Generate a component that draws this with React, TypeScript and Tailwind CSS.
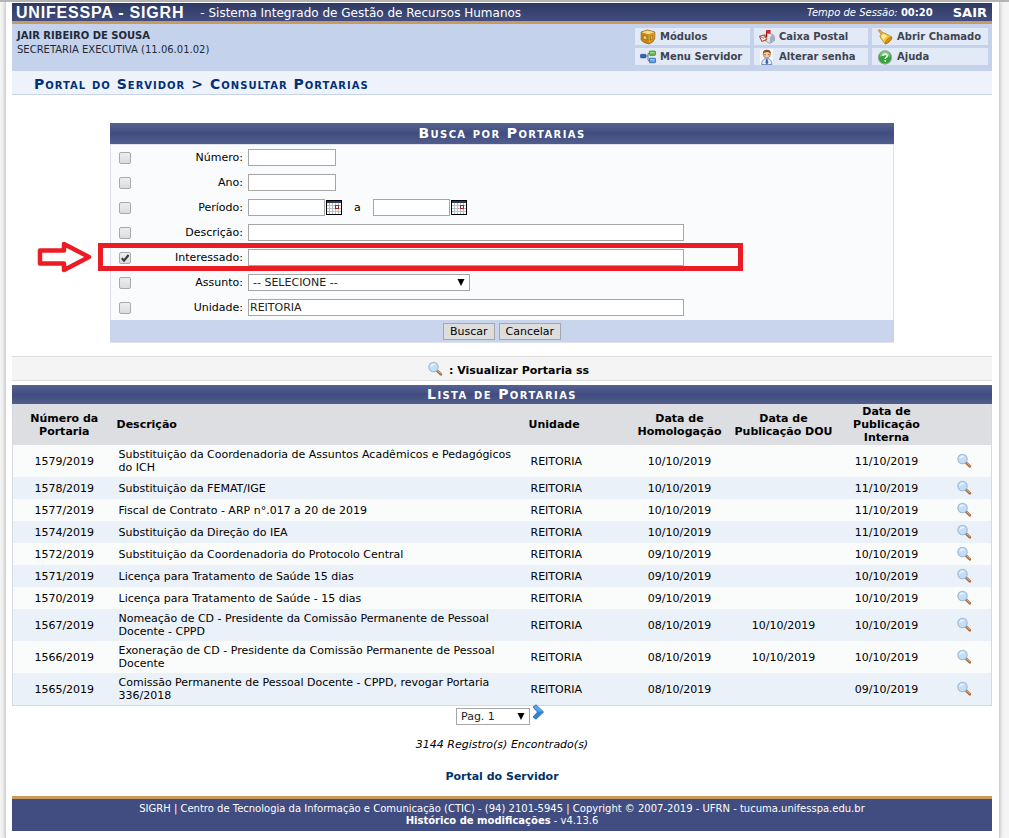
import type { ReactNode } from "react";

type Portaria = {
  numero: string;
  descricao: string;
  homologacao: string;
  dou?: string;
  interna: string;
};

const portarias: Portaria[] = [
  { numero: "1579/2019", descricao: "Substituição da Coordenadoria de Assuntos Acadêmicos e Pedagógicos do ICH", homologacao: "10/10/2019", interna: "11/10/2019" },
  { numero: "1578/2019", descricao: "Substituição da FEMAT/IGE", homologacao: "10/10/2019", interna: "11/10/2019" },
  { numero: "1577/2019", descricao: "Fiscal de Contrato - ARP n°.017 a 20 de 2019", homologacao: "10/10/2019", interna: "11/10/2019" },
  { numero: "1574/2019", descricao: "Substituição da Direção do IEA", homologacao: "10/10/2019", interna: "11/10/2019" },
  { numero: "1572/2019", descricao: "Substituição da Coordenadoria do Protocolo Central", homologacao: "09/10/2019", interna: "10/10/2019" },
  { numero: "1571/2019", descricao: "Licença para Tratamento de Saúde 15 dias", homologacao: "09/10/2019", interna: "10/10/2019" },
  { numero: "1570/2019", descricao: "Licença para Tratamento de Saúde - 15 dias", homologacao: "09/10/2019", interna: "10/10/2019" },
  { numero: "1567/2019", descricao: "Nomeação de CD - Presidente da Comissão Permanente de Pessoal Docente - CPPD", homologacao: "08/10/2019", dou: "10/10/2019", interna: "10/10/2019" },
  { numero: "1566/2019", descricao: "Exoneração de CD - Presidente da Comissão Permanente de Pessoal Docente", homologacao: "08/10/2019", dou: "10/10/2019", interna: "10/10/2019" },
  { numero: "1565/2019", descricao: "Comissão Permanente de Pessoal Docente - CPPD, revogar Portaria 336/2018", homologacao: "08/10/2019", interna: "09/10/2019" },
];

function MagnifierIcon() {
  return (
    <svg viewBox="0 0 16 16" className="inline-block size-4" aria-hidden="true">
      <path d="M10.2 9.8 L13.8 13.2" stroke="#a9734a" strokeWidth="2.8" strokeLinecap="round" />
      <path d="M11 10 L13.6 12.4" stroke="#e0ae7c" strokeWidth="1" strokeLinecap="round" />
      <circle cx="6.5" cy="6" r="4.7" fill="#c3def5" stroke="#9db9d8" strokeWidth="1.1" />
      <path d="M3.4 5.8 A3.2 3.2 0 0 1 8.6 3.4 Q6 4 3.4 5.8Z" fill="#eef7ff" />
    </svg>
  );
}

function ModulesIcon() {
  return (
    <svg viewBox="0 0 16 16" className="size-4" aria-hidden="true">
      <path d="M1.200 3 7.500 1 14.800 3V9.500Q13.500 13.500 9 15 3 13.800 1.200 11Z" fill="#c98a1c" stroke="#94600f" strokeWidth=".8" />
      <path d="M1.500 3.200 7.600 1.400 14.500 3.200 8.600 5.200Z" fill="#f8df86" />
      <path d="M8.700 5.600 14.500 3.800V9.300Q13 13 8.900 14.600Z" fill="#d99a26" />
      <path d="M3.200 6.200v3.600l3.600 1.400V7.400Z" fill="#f7d665" stroke="#8a5a10" strokeWidth=".7" />
      <path d="M10.500 7.200l2.200-.8v3.400l-2.200 1.200Z" fill="#f0c24d" stroke="#8a5a10" strokeWidth=".6" />
    </svg>
  );
}

function MenuTreeIcon() {
  return (
    <svg viewBox="0 0 16 16" className="size-4" aria-hidden="true">
      <path d="M5 7h3M8 4.5v7h2M8 4.5h2" fill="none" stroke="#6f7f94" strokeWidth="1" />
      <rect x=".5" y="5.3" width="5.5" height="3.6" rx=".8" fill="#2f69b3" stroke="#1d4785" strokeWidth=".6" />
      <rect x="9.3" y="2" width="6.2" height="4.4" rx=".8" fill="#65b94b" stroke="#36862a" strokeWidth=".7" />
      <rect x="10.3" y="3" width="4.2" height="1.2" fill="#a8e090" />
      <rect x="9.3" y="9.2" width="6.2" height="4.6" rx=".8" fill="#5c9be0" stroke="#1e57a0" strokeWidth=".7" />
      <rect x="10.3" y="10.2" width="4.2" height="1.2" fill="#a9cff5" />
    </svg>
  );
}

function MailboxIcon() {
  return (
    <svg viewBox="0 0 16 16" className="size-4" aria-hidden="true">
      <path d="M6 6.500Q8 3.500 11 4.500L14.500 6Q16 8 15.500 11.500L11 14.500 6.500 12Z" fill="#e3e7ed" stroke="#7d8795" strokeWidth=".7" />
      <path d="M10.800 14.300V9Q12 5.600 14 6.200q1.800 1.600 1.400 5.200Z" fill="#a4adbb" />
      <path d="M.6 7.400 5.500 6l2.200 4.600-4.800 1.800Z" fill="#fff" stroke="#a9503a" strokeWidth="1.100" />
      <path d="M1 7.700l3.800 1.600L5.400 6.400" fill="none" stroke="#a9503a" strokeWidth=".8" />
      <path d="M7.600 8.500V1.500" stroke="#8c1710" strokeWidth="1.300" />
      <path d="M7.600 1h4v3.400h-4Z" fill="#d42920" />
    </svg>
  );
}

function UserIcon() {
  return (
    <svg viewBox="0 0 16 16" className="size-4" aria-hidden="true">
      <rect x="1" width="13" height="16" fill="#f6f8fd" />
      <path d="M2.6 15.5Q3 10.6 6 9.8h3.5q3 .8 3.6 5.7Z" fill="#e6eefc" stroke="#6b83bd" strokeWidth=".9" />
      <path d="M7 10.2h1.6l.8 3.6-1.5 1.7-1.5-1.7Z" fill="#3564b8" />
      <circle cx="7.8" cy="5.3" r="3.6" fill="#f6cfa5" stroke="#b5662a" strokeWidth=".7" />
      <path d="M3.900 4.600Q3.600.8 7.800.8q4.300 0 4 3.800-1.200-1.600-4-1.600t-3.900 1.600Z" fill="#8a4b1c" />
      <path d="M5 5.700h2m1.700 0h2" stroke="#7a6350" strokeWidth=".9" />
    </svg>
  );
}

function BellIcon() {
  return (
    <svg viewBox="0 0 16 16" className="size-4" aria-hidden="true">
      <path d="M1.200 1.400 3 .8l2.400 2.600L4 4.800Z" fill="#f0c63e" stroke="#98690e" strokeWidth=".7" />
      <path d="M3.600 5.600Q5.400 2.600 8 4.200L14.600 7.800q.8 1.600-1.800 4.200T8.200 15L3.800 9Q2.400 7 3.600 5.600Z" fill="#f6c945" stroke="#ab7714" strokeWidth=".7" />
      <path d="M4.600 6.400q1.400-1.800 2.800-1L10 7 6.400 10.600Q3.800 8 4.600 6.400Z" fill="#fcee9c" />
      <path d="M8.200 15q-.2-2.600 2-4.800t4.600-2.200q.6 1.800-1.800 4.200T8.200 15Z" fill="#d4901c" stroke="#8d5a0d" strokeWidth=".5" />
    </svg>
  );
}

function HelpIcon() {
  return (
    <svg viewBox="0 0 16 16" className="size-4" aria-hidden="true">
      <circle cx="8" cy="8.500" r="6.600" fill="#35a23c" stroke="#8fa893" strokeWidth="1.100" />
      <path d="M2.900 7.700a5.100 5.100 0 0 1 10.200 0Q8 6 2.900 7.700Z" fill="#7fd07e" />
      <path d="M5.900 6.900q.2-2 2.200-2t2.200 1.800q0 1-1.200 1.800-.9.6-.9 1.500" fill="none" stroke="#fff" strokeWidth="1.500" />
      <circle cx="8.200" cy="11.900" r=".9" fill="#fff" />
    </svg>
  );
}

function CalendarIcon() {
  return (
    <svg viewBox="0 0 16 15" className="h-[15px] w-4" shapeRendering="crispEdges" aria-hidden="true">
      <rect width="16" height="15" fill="#000" />
      <rect x="1" y="1" width="14" height="2" fill="#2b3c5f" />
      <rect x="1" y="3" width="14" height="11" fill="#fff" />
      <path d="M3.5 3v11M6.5 3v11M9.5 3v11M12.5 3v11M1 5.5h14M1 8.5h14M1 11.5h14" stroke="#b9bcc4" strokeWidth="1" />
      <rect x="9.5" y="5.5" width="3" height="3" fill="#fff" stroke="#a52020" />
    </svg>
  );
}

function BarTitle({ children, className }: { children: ReactNode; className: string }) {
  return (
    <h2 className={"bg-linear-to-b from-[#56628f] via-[#414d80] to-[#515d8c] text-center text-[14px] font-bold tracking-widest text-white [font-variant:small-caps] " + className}>
      {children}
    </h2>
  );
}

function ShortcutLink({ icon, children }: { icon: ReactNode; children: ReactNode }) {
  return (
    <a href="#" className="flex h-[17px] items-center gap-1 bg-[#e3eaf7] pl-[5px] font-bold text-[#3f4450]">
      {icon}
      {children}
    </a>
  );
}

function FilterRow({ id, label, checked, overlay, children }: { id: string; label: string; checked?: boolean; overlay?: ReactNode; children: ReactNode }) {
  return (
    <div className="relative flex h-[25px] items-center">
      <span className="relative ml-2 grid size-3">
        <input
          type="checkbox"
          defaultChecked={checked}
          aria-label={"Filtrar por " + label}
          className="peer col-start-1 row-start-1 size-3 appearance-none rounded-xs border border-[#a9a9a9] bg-linear-to-b from-[#eeeeee] to-[#dcdcdc]"
        />
        <svg viewBox="0 0 12 12" className="pointer-events-none invisible col-start-1 row-start-1 size-3 peer-checked:visible" aria-hidden="true">
          <path d="M2.8 6.2 5 8.6 9.6 3" fill="none" stroke="#3c3c3c" strokeWidth="2.2" />
        </svg>
      </span>
      <label htmlFor={id} className="mr-[5px] w-28 text-right">
        {label}:
      </label>
      {children}
      {overlay}
    </div>
  );
}

const field = "h-[17px] border border-[#a6a6a6] bg-white px-px text-[#222]";

function Highlight() {
  return (
    <>
      <div className="pointer-events-none absolute -top-[2px] -left-[13px] h-7 w-[645px] border-5 border-[#ea1c24]" />
      <svg viewBox="0 0 56 32" className="pointer-events-none absolute -top-1 -left-[74px] h-8 w-14" aria-hidden="true">
        <path d="M3 9.5H27V3L52 16 27 29V22.500H3Z" fill="#fff" stroke="#ea1c24" strokeWidth="4.500" strokeLinejoin="round" />
      </svg>
    </>
  );
}

function SelectArrow() {
  return (
    <svg viewBox="0 0 8 7" className="pointer-events-none absolute top-[5px] right-[5px] h-[7px] w-2" aria-hidden="true">
      <path d="M.5 0h7L4 7Z" fill="#000" />
    </svg>
  );
}

export default function App() {
  return (
    <div className="border-t-2 border-[#b4b4b4] bg-[#f5f5f5] pr-[9px] pl-[5px] font-['DejaVu_Sans',Verdana,sans-serif] text-[11px] leading-[13px] text-black">
      <div className="border-x border-[#d2d2d2] bg-white pt-px pr-[7px] pb-[7px] pl-[6px] shadow-[0_0_4px_#b5b5b5]">
        <header>
          <div className="flex h-[21px] items-center border-b-3 border-[#c9995f] bg-linear-to-b from-[#2f3a63] to-[#414d7e] text-white">
            <h1 className="pl-1 font-['Liberation_Sans',Arial,sans-serif] text-[16px] font-bold tracking-wider">UNIFESSPA - SIGRH</h1>
            <span className="ml-4 pt-[2px] text-[12px]">- Sistema Integrado de Gestão de Recursos Humanos</span>
            <span className="ml-auto text-[10px]">
              <em>Tempo de Sessão:</em> <b>00:20</b>
            </span>
            <a href="#" className="mr-[5px] ml-5 text-[13px] font-bold">SAIR</a>
          </div>
          <div className="flex h-[47px] justify-between bg-[#c4d2eb]">
            <div className="pt-[5px] pl-[5px] text-[10px] leading-[14px] text-[#222a3a]">
              <p className="font-bold">JAIR RIBEIRO DE SOUSA</p>
              <p>SECRETARIA EXECUTIVA (11.06.01.02)</p>
            </div>
            <nav className="mr-1 grid grid-cols-[115px_114px_116px] content-start gap-x-1 gap-y-[3px] pt-1 text-[10px]">
              <ShortcutLink icon={<ModulesIcon />}>Módulos</ShortcutLink>
              <ShortcutLink icon={<MailboxIcon />}>Caixa Postal</ShortcutLink>
              <ShortcutLink icon={<BellIcon />}>Abrir Chamado</ShortcutLink>
              <ShortcutLink icon={<MenuTreeIcon />}>Menu Servidor</ShortcutLink>
              <ShortcutLink icon={<UserIcon />}>Alterar senha</ShortcutLink>
              <ShortcutLink icon={<HelpIcon />}>Ajuda</ShortcutLink>
            </nav>
          </div>
          <div className="flex h-6 items-center gap-[6px] border-b border-[#c8d5e6] bg-[#eef3fb] pt-1 pl-[22px] text-[14px] font-bold tracking-[1px] text-[#003078] [font-variant:small-caps]">
            <a href="#">Portal do Servidor</a>
            <span>&gt;</span>
            <span>Consultar Portarias</span>
          </div>
        </header>

        <main>
          <form className="mx-auto mt-7 w-4/5 border-b border-[#dee3ee]" onSubmit={(e) => e.preventDefault()}>
            <BarTitle className="h-[21px] leading-[21px]">Busca por Portarias</BarTitle>
            <div className="border-x border-t border-[#dfe2ec] bg-[#fafbfd]">
              <FilterRow id="numero" label="Número">
                <input id="numero" className={field + " w-[88px]"} />
              </FilterRow>
              <FilterRow id="ano" label="Ano">
                <input id="ano" className={field + " w-[88px]"} />
              </FilterRow>
              <FilterRow id="inicio" label="Período">
                <input id="inicio" className={field + " w-[77px]"} />
                <button type="button" aria-label="Selecionar data inicial" className="ml-px"><CalendarIcon /></button>
                <label htmlFor="fim" className="mx-3">a</label>
                <input id="fim" className={field + " w-[77px]"} />
                <button type="button" aria-label="Selecionar data final" className="ml-px"><CalendarIcon /></button>
              </FilterRow>
              <FilterRow id="descricao" label="Descrição">
                <input id="descricao" className={field + " w-[436px]"} />
              </FilterRow>
              <FilterRow id="interessado" label="Interessado" checked overlay={<Highlight />}>
                <input id="interessado" className={field + " w-[436px]"} />
              </FilterRow>
              <FilterRow id="assunto" label="Assunto">
                <span className="relative flex">
                  <select id="assunto" className={field + " w-[222px] appearance-none pl-1"}>
                    <option>-- SELECIONE --</option>
                  </select>
                  <SelectArrow />
                </span>
              </FilterRow>
              <FilterRow id="unidade" label="Unidade">
                <input id="unidade" defaultValue="REITORIA" className={field + " w-[436px]"} />
              </FilterRow>
            </div>
            <div className="flex h-[22px] items-center justify-center gap-1 bg-[#c8d5ec]">
              <button type="submit" className="h-[17px] border border-[#a3a6aa] bg-[#dddddd] px-[6px] leading-[15px]">Buscar</button>
              <button type="button" className="h-[17px] border border-[#a3a6aa] bg-[#dddddd] px-[6px] leading-[15px]">Cancelar</button>
            </div>
          </form>

          <div className="mt-[13px] flex h-[25px] items-center justify-center gap-[6px] border-y border-[#dcdcdc] bg-[#f4f4f4] pl-3 font-bold">
            <MagnifierIcon />
            <span className="pt-1">: Visualizar Portaria ss</span>
          </div>

          <BarTitle className="mt-1 h-[19px] leading-[19px]">Lista de Portarias</BarTitle>
          <table className="w-full table-fixed border-collapse border-x border-b border-[#d6d9e0]">
            <colgroup>
              <col className="w-[103px]" />
              <col />
              <col className="w-[100px]" />
              <col className="w-[104px]" />
              <col className="w-[104px]" />
              <col className="w-[102px]" />
              <col className="w-[54px]" />
            </colgroup>
            <thead className="bg-[#dddee2]">
              <tr className="h-[41px]">
                <th className="px-3">Número da Portaria</th>
                <th className="px-px text-left">Descrição</th>
                <th className="px-px text-left">Unidade</th>
                <th>Data de Homologação</th>
                <th>Data de Publicação DOU</th>
                <th className="px-3">Data de Publicação Interna</th>
                <td />
              </tr>
            </thead>
            <tbody>
              {portarias.map((p) => (
                <tr key={p.numero} className="odd:bg-[#fafcfc] even:bg-[#ebf1f8]">
                  <td className="py-[3px] text-center">{p.numero}</td>
                  <td className="py-[3px] pr-2 pl-[3px]">{p.descricao}</td>
                  <td className="py-[3px] pl-[3px]">REITORIA</td>
                  <td className="py-[3px] text-center">{p.homologacao}</td>
                  <td className="py-[3px] text-center">{p.dou}</td>
                  <td className="py-[3px] text-center">{p.interna}</td>
                  <td className="py-[3px]">
                    <a href="#" aria-label={"Visualizar portaria " + p.numero} className="flex justify-center">
                      <MagnifierIcon />
                    </a>
                  </td>
                </tr>
              ))}
            </tbody>
          </table>

          <div className="mt-[2px] flex items-start justify-center gap-[2px] pr-1">
            <span className="relative flex">
              <select aria-label="Página" className={field + " w-[74px] appearance-none pl-1"}>
                <option>Pag. 1</option>
              </select>
              <SelectArrow />
            </span>
            <button type="button" aria-label="Próxima página" className="-mt-1">
              <svg viewBox="0 0 12 16" className="h-4 w-3" aria-hidden="true">
                <path d="M1 3 4 .8 11.500 8 4 15.200 1 13 5.500 8Z" fill="#2f86d6" stroke="#1b62ae" strokeWidth=".8" />
                <path d="M1.500 3 4 1.300 10.800 7.600 6 7.600Z" fill="#5aa8ea" />
              </svg>
            </button>
          </div>
          <p className="mt-[13px] text-center italic">3144 Registro(s) Encontrado(s)</p>
          <p className="mt-[19px] text-center font-bold text-[#003366]">
            <a href="#">Portal do Servidor</a>
          </p>
        </main>

        <footer className="mt-[13px] border-t-3 border-[#c9995f] bg-[#414d80] pt-1 pb-1 text-center text-[10px] leading-3 text-white">
          <p>SIGRH | Centro de Tecnologia da Informação e Comunicação (CTIC) - (94) 2101-5945 | Copyright © 2007-2019 - UFRN - tucuma.unifesspa.edu.br</p>
          <p><b>Histórico de modificações</b> - v4.13.6</p>
        </footer>
      </div>
    </div>
  );
}
